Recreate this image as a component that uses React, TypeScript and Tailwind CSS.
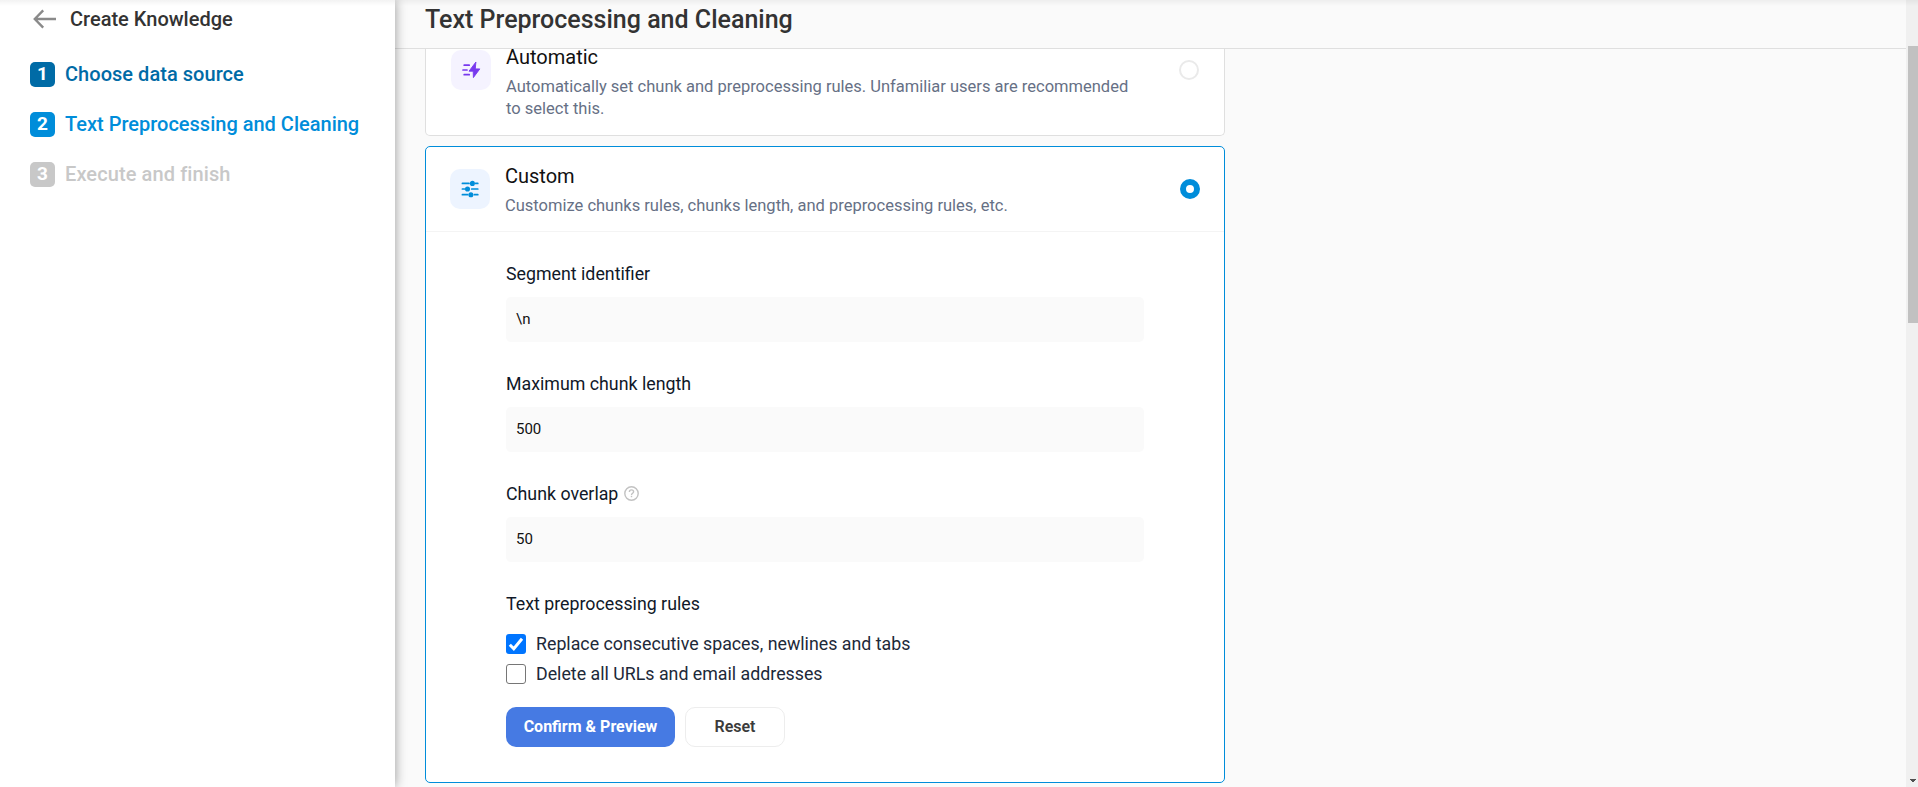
import type { ReactNode } from "react";

type Step = { n: number; label: string; badge: string; text: string };

const steps: Step[] = [
  { n: 1, label: "Choose data source", badge: "bg-[#006ba6]", text: "text-[#006ba6] tracking-[0.04px]" },
  { n: 2, label: "Text Preprocessing and Cleaning", badge: "bg-[#008dda]", text: "text-[#008dda]" },
  { n: 3, label: "Execute and finish", badge: "bg-[#c8c8c8]", text: "text-[#c8c8c8] tracking-[0.1px]" },
];

function ArrowLeft() {
  return (
    <svg width="24" height="20" viewBox="0 0 24 20" fill="none" stroke="#8a8a8a" strokeWidth="2.4">
      <path d="M23 10H2.4M10.2 1.4L1.8 10l8.4 8.6" />
    </svg>
  );
}

function BoltIcon() {
  return (
    <svg width="20" height="20" viewBox="0 0 20 20" fill="none" stroke="#7839ee" strokeWidth="1.7" strokeLinecap="round">
      <path d="M3.2 5.2h5M2 10h4M3.2 14.7h5" />
      <path d="M14.7 2.3L8 11.2h4.2l.2 6.4L18.8 8.9h-4.2z" fill="#7839ee" strokeWidth="0.9" strokeLinejoin="round" />
    </svg>
  );
}

function SlidersIcon() {
  return (
    <svg width="20" height="20" viewBox="0 0 20 20" fill="#008dda" stroke="#008dda" strokeWidth="1.7" strokeLinecap="round">
      <path d="M2.4 4.4h6.6M15.6 4.4h2.2M2.4 10h2M11.7 10h6.1M2.4 15.7h5.2M14.4 15.7h3.4" />
      <circle cx="12.4" cy="4.4" r="1.7" />
      <circle cx="7.5" cy="10" r="1.7" />
      <circle cx="10.9" cy="15.7" r="1.7" />
    </svg>
  );
}

function HelpIcon() {
  return (
    <svg width="15" height="15" viewBox="0 0 15 15" fill="none" stroke="#c2c2c2" strokeWidth="1.4">
      <circle cx="7.5" cy="7.5" r="6.7" />
      <path d="M5.4 6c0-1.3.9-2.1 2.1-2.1s2.1.8 2.1 1.9c0 1.5-2.1 1.5-2.1 3.2" />
      <path d="M7.5 9.8v1.4" />
    </svg>
  );
}

function Field({ label, value, help }: { label: string; value: string; help?: ReactNode }) {
  return (
    <div className="mb-[31px]">
      <div className="flex h-[34px] items-start gap-1.5 text-[17.8px] leading-[22px] text-[#101828]">
        {label}
        {help}
      </div>
      <div className="flex h-[45px] items-center rounded-[5px] bg-[#fafafa] px-2.5 text-[15px] text-[#111]">
        {value}
      </div>
    </div>
  );
}

function Sidebar() {
  return (
    <aside className="relative z-10 w-[395px] shrink-0 bg-white pl-[30px] shadow-[0_0_11px_rgba(0,0,0,0.4)]">
      <div className="flex h-[38px] items-center gap-[13px] pl-[3px] text-[20px] font-medium text-[#333]">
        <ArrowLeft />
        Create Knowledge
      </div>
      <div className="mt-6 flex flex-col gap-[25px]">
        {steps.map((s) => (
          <div key={s.n} className="flex h-[25px] items-center gap-2.5">
            <span className={`flex size-[25px] items-center justify-center rounded-[5px] text-[19px] font-bold text-white ${s.badge}`}>
              {s.n}
            </span>
            <span className={`text-[20px] leading-[25px] font-medium whitespace-nowrap ${s.text}`}>{s.label}</span>
          </div>
        ))}
      </div>
    </aside>
  );
}

export default function App() {
  return (
    <div className="relative flex h-[787px] w-full overflow-hidden bg-[#fafafa] font-[Roboto,sans-serif]">
      <Sidebar />
      <main className="flex min-w-0 flex-1 flex-col">
        <header className="flex h-[49px] shrink-0 items-start border-b border-[#dfdfdf] pl-[30px] text-[25px] leading-[40px] font-medium text-[#333]">
          Text Preprocessing and Cleaning
        </header>
        <div className="flex min-h-0 flex-1 flex-col items-start overflow-hidden pl-[30px]">
          <section className="flex h-[87px] w-[800px] shrink-0 items-start rounded-b-[5px] border border-t-0 border-[#dfdfdf] bg-white pl-[25px]">
            <div className="mt-px flex size-10 items-center justify-center rounded-[10px] bg-[#f5f3ff]">
              <BoltIcon />
            </div>
            <div className="ml-[15px] w-[640px]">
              <div className="-mt-1 h-[31px] text-[20px] leading-[24px] text-[#111]">Automatic</div>
              <p className="text-[16.5px] leading-[22px] text-[#667085]">
                Automatically set chunk and preprocessing rules. Unfamiliar users are recommended to select this.
              </p>
            </div>
            <span className="mt-[11px] ml-[33px] size-5 rounded-full border-2 border-[#eaeaea]" />
          </section>

          <section className="mt-2.5 flex h-[637px] w-[800px] shrink-0 flex-col rounded-[5px] border border-[#008dda] bg-white">
            <div className="flex h-[85px] shrink-0 items-start border-b border-[#f4f4f4] pl-6">
              <div className="mt-[22px] flex size-10 items-center justify-center rounded-[10px] bg-[#edf4ff]">
                <SlidersIcon />
              </div>
              <div className="mt-[17px] ml-[15px] w-[650px]">
                <div className="h-[31px] text-[20px] leading-[24px] text-[#111]">Custom</div>
                <p className="text-[16.5px] leading-[22px] text-[#667085]">
                  Customize chunks rules, chunks length, and preprocessing rules, etc.
                </p>
              </div>
              <span className="mt-8 ml-[25px] size-5 rounded-full border-6 border-[#008dda] bg-white" />
            </div>
            <div className="w-[718px] pt-[31px] pl-20">
              <Field label="Segment identifier" value="\n" />
              <Field label="Maximum chunk length" value="500" />
              <Field
                label="Chunk overlap"
                value="50"
                help={<span className="mt-[3px]"><HelpIcon /></span>}
              />
              <div className="h-[41px] text-[17.8px] leading-[22px] text-[#101828]">Text preprocessing rules</div>
              <div className="flex h-5 items-center gap-2.5 text-[17.8px] whitespace-nowrap text-[#1d2939]">
                <span className="flex size-5 items-center justify-center rounded-[3px] bg-[#0075ff]">
                  <svg width="16" height="16" viewBox="0 0 16 16" fill="none" stroke="#fff" strokeWidth="3">
                    <path d="M1.8 8.7l4 4L14 2.7" />
                  </svg>
                </span>
                Replace consecutive spaces, newlines and tabs
              </div>
              <div className="mt-2.5 flex h-5 items-center gap-2.5 text-[17.8px] whitespace-nowrap text-[#1d2939]">
                <span className="size-5 rounded-[3px] border border-[#767676] bg-white" />
                Delete all URLs and email addresses
              </div>
              <div className="mt-[23px] flex gap-2.5 text-[16px]">
                <button className="h-10 w-[169px] rounded-[10px] bg-[#467ae3] font-bold text-white">Confirm &amp; Preview</button>
                <button className="h-10 w-[100px] rounded-[10px] border border-[#ededed] bg-white font-semibold text-[#3b3b3b]">Reset</button>
              </div>
            </div>
          </section>
        </div>
      </main>
      <div className="flex w-3 shrink-0 flex-col items-end bg-[#f0f0f0] pt-[46px]">
        <div className="h-[277px] w-2.5 bg-[#c1c1c1]" />
        <svg className="mt-auto mr-0.5 mb-[5px]" width="6" height="3" viewBox="0 0 6 3" fill="#505050" shapeRendering="crispEdges">
          <path d="M0 0h6L4 3H2z" />
        </svg>
      </div>
      <div className="pointer-events-none absolute inset-x-0 top-0 z-20 h-1.5 bg-linear-to-b from-black/5 to-transparent" />
    </div>
  );
}
